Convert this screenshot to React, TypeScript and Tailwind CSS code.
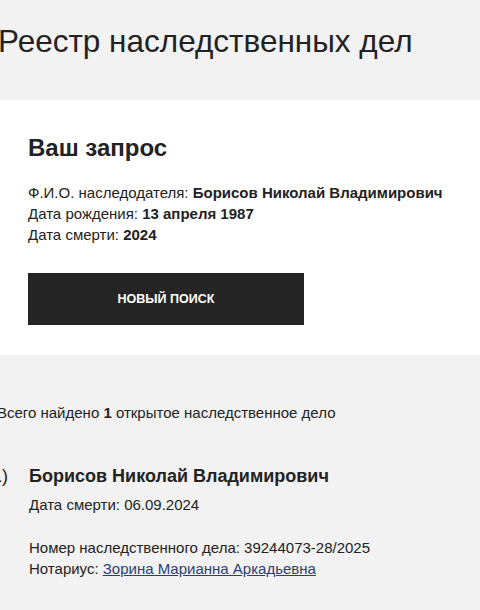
import React from "react";

export default function App() {
  return (
    <div
      className="min-h-screen w-[480px] overflow-hidden bg-[#f2f2f2] text-[#222222]"
      style={{ fontFamily: '"Liberation Sans", Arial, sans-serif' }}
    >
      <h1 className="-ml-[2px] pt-[21px] pb-[39px] text-[31.5px] leading-[40px] font-normal whitespace-nowrap">
        Реестр наследственных дел
      </h1>

      <div className="bg-white pl-[28px] pt-[33px] pb-[30px]">
        <h2 className="text-[24px] leading-[30px] font-bold">Ваш запрос</h2>
        <div className="mt-[19px] text-[15px] leading-[21px]">
          <div>
            Ф.И.О. наследодателя: <b>Борисов Николай Владимирович</b>
          </div>
          <div>
            Дата рождения: <b>13 апреля 1987</b>
          </div>
          <div>
            Дата смерти: <b>2024</b>
          </div>
        </div>
        <button className="mt-[28px] flex h-[52px] w-[276px] items-center justify-center bg-[#252525] text-[12.5px] font-bold uppercase text-white">
          Новый поиск
        </button>
      </div>

      <div className="-ml-[3px] pt-[47px] text-[15px] leading-[21px] whitespace-nowrap">
        Всего найдено <b>1</b> открытое наследственное дело
      </div>

      <div className="mt-[41px] flex">
        <span className="-ml-[8px] w-[37px] shrink-0 text-[18px] leading-[24px]">1)</span>
        <div>
          <div className="text-[18px] leading-[24px] font-bold">Борисов Николай Владимирович</div>
          <div className="mt-[6px] text-[15px] leading-[21px]">Дата смерти: 06.09.2024</div>
          <div className="mt-[22px] text-[15px] leading-[21px]">
            Номер наследственного дела: 39244073-28/2025
          </div>
          <div className="text-[15px] leading-[21px]">
            Нотариус:{" "}
            <a href="#" className="text-[#2c3e73] underline">
              Зорина Марианна Аркадьевна
            </a>
          </div>
        </div>
      </div>
    </div>
  );
}
